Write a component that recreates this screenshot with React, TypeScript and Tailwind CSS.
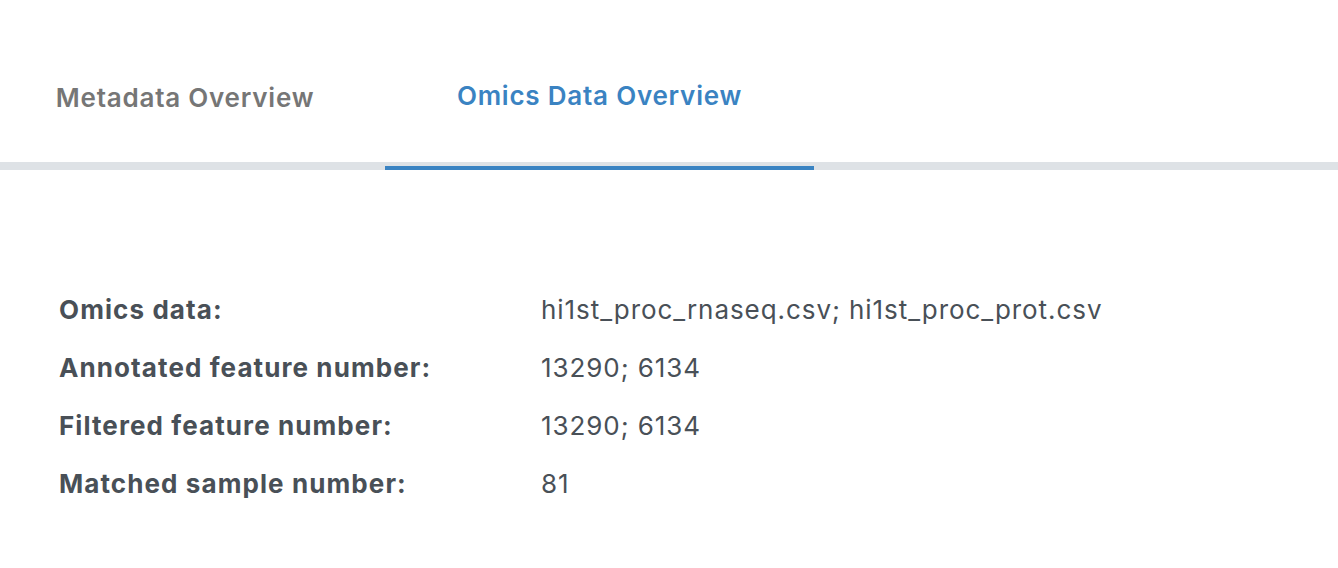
const rows: [string, string][] = [
  ["Omics data:", "hi1st_proc_rnaseq.csv; hi1st_proc_prot.csv"],
  ["Annotated feature number:", "13290; 6134"],
  ["Filtered feature number:", "13290; 6134"],
  ["Matched sample number:", "81"],
];

export default function App() {
  return (
    <div className="h-[568px] w-[1338px] bg-white font-['Inter',sans-serif] antialiased">
      {/* tab strip */}
      <div className="flex h-[170px]">
        <div className="flex w-[385px] border-b-4 border-[#dee2e6] pr-[15px] shadow-[inset_0_-4px_0_#dee2e6]">
          <span className="mx-auto mt-[82px] text-[26px] font-semibold leading-[32px] tracking-[0.03em] text-[#767676]">
            Metadata Overview
          </span>
        </div>
        <div className="flex w-[429px] border-b-4 border-[#3a83c2] shadow-[inset_0_-4px_0_#dee2e6]">
          <span className="mx-auto mt-[80px] text-[26px] font-semibold leading-[32px] tracking-[0.03em] text-[#3a83c2]">
            Omics Data Overview
          </span>
        </div>
        <div className="flex-1 border-b-4 border-[#dee2e6] shadow-[inset_0_-4px_0_#dee2e6]" />
      </div>

      {/* summary table */}
      <div className="pl-[59px] pt-[111px]">
        {rows.map(([label, value]) => (
          <div key={label} className="flex text-[26px] leading-[58px] text-[#495057]">
            <span className="w-[482px] font-bold tracking-[0.042em]">{label}</span>
            <span className="tracking-[0.036em]">{value}</span>
          </div>
        ))}
      </div>
    </div>
  );
}
